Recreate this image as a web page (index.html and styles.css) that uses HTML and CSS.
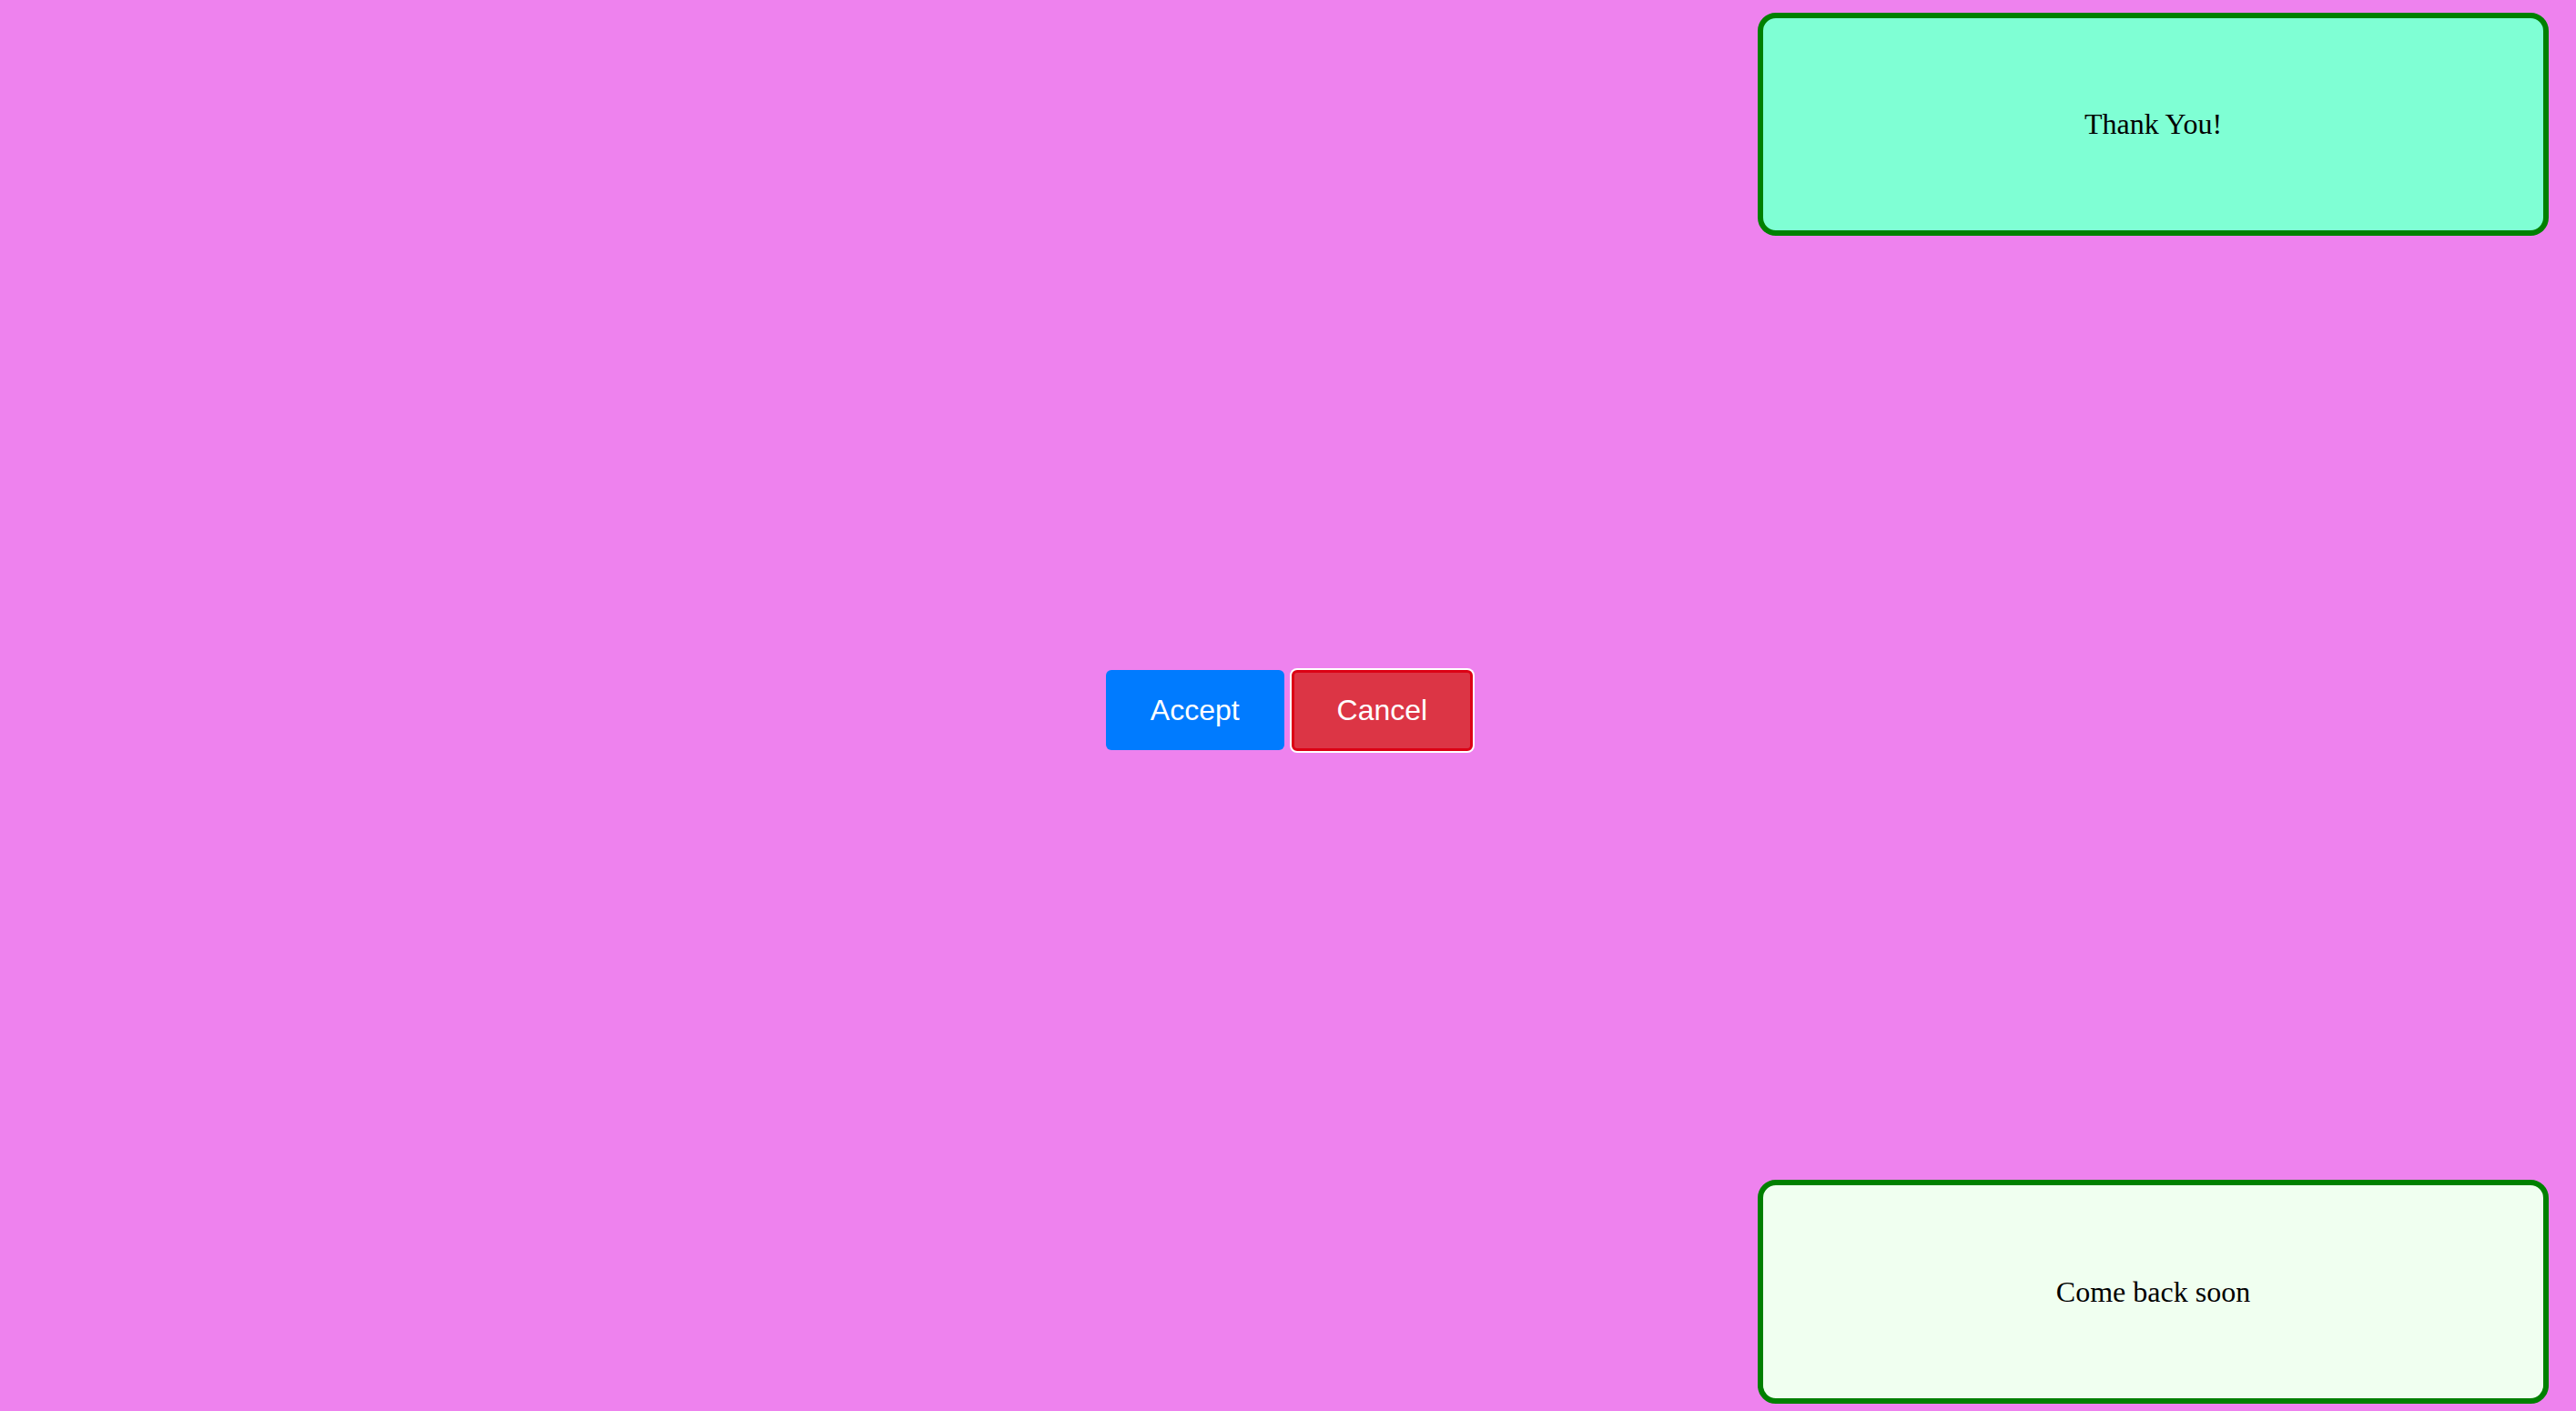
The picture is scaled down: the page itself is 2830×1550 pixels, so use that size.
FILE: index.html
```html
<!DOCTYPE html>
<html lang="en">
<head>
<meta charset="utf-8">
<title>Buttons</title>
<link rel="stylesheet" href="styles.css">
</head>
<body>
<div class="page">
  <div class="side"></div>
  <div class="actions">
    <button class="btn btn-accept" type="button">Accept</button>
    <button class="btn btn-cancel" type="button">Cancel</button>
  </div>
  <div class="notes">
    <div class="note note-thanks">Thank You!</div>
    <div class="note note-soon">Come back soon</div>
  </div>
</div>
</body>
</html>
```

FILE: styles.css
```css
html, body {
  margin: 0;
  padding: 0;
  height: 100%;
}

body {
  background: #ee82ee;
  font-family: "Liberation Serif", "Times New Roman", serif;
}

.page {
  height: 100vh;
  display: grid;
  grid-template-columns: 1fr auto 1fr;
}

.actions {
  display: flex;
  align-items: center;
  gap: 8px;
  align-self: center;
  margin-top: 10px;
  margin-left: 3px;
}

.btn {
  box-sizing: border-box;
  height: 88px;
  font-family: "Liberation Sans", Arial, sans-serif;
  font-size: 32px;
  color: #ffffff;
  border-radius: 6px;
  cursor: pointer;
}

.btn-accept {
  background: #007bff;
  border: 0;
  padding: 0 49px;
}

.btn-cancel {
  background: #dc3545;
  border: 3px solid #dc0014;
  padding: 0 47px;
  box-shadow: 0 0 0 2px #ffffff;
  height: 89px;
}

.notes {
  display: flex;
  flex-direction: column;
  justify-content: space-between;
  align-items: flex-end;
  padding: 14px 30px 8px 0;
}

.note {
  box-sizing: border-box;
  width: 869px;
  height: 245px;
  border: 6px solid #008000;
  border-radius: 20px;
  display: flex;
  align-items: center;
  justify-content: center;
  font-size: 32px;
  color: #000000;
}

.note-thanks {
  background: #7fffd4;
}

.note-soon {
  background: #f0fff0;
  height: 246px;
}
```
